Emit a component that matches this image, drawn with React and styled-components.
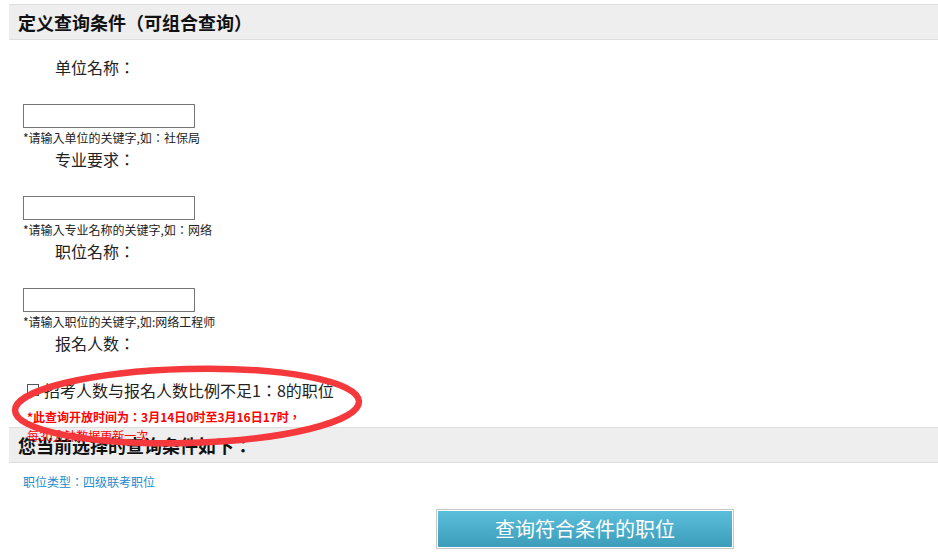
import styled, { createGlobalStyle } from "styled-components";

const GlobalStyle = createGlobalStyle`
  html, body {
    margin: 0;
    padding: 0;
    background: #ffffff;
  }
  body {
    font-family: "Noto Sans CJK TC", "Noto Sans CJK SC", "Liberation Sans", sans-serif;
    color: #222;
  }
`;

const fields = [
  { label: "单位名称：", hint: "*请输入单位的关键字,如：社保局" },
  { label: "专业要求：", hint: "*请输入专业名称的关键字,如：网络" },
  { label: "职位名称：", hint: "*请输入职位的关键字,如:网络工程师" },
];

export default function App() {
  return (
    <>
      <GlobalStyle />
      <Page>
        <Bar>定义查询条件（可组合查询）</Bar>
        {fields.map((f) => (
          <Field key={f.label}>
            <Label>{f.label}</Label>
            <TextInput type="text" />
            <Hint>{f.hint}</Hint>
          </Field>
        ))}
        <Label>报名人数：</Label>
        <CheckRow>
          <Box />
          <span>招考人数与报名人数比例不足1：8的职位</span>
        </CheckRow>
        <Notice>
          <b>*此查询开放时间为：3月14日0时至3月16日17时，</b>
          <br />
          每30分钟数据更新一次
        </Notice>
        <Bar>您当前选择的查询条件如下：</Bar>
        <Selected>职位类型：四级联考职位</Selected>
        <Submit>查询符合条件的职位</Submit>

        <Mark viewBox="0 0 938 556" width="938" height="556">
          <ellipse
            cx="187"
            cy="406"
            rx="172"
            ry="37"
            fill="none"
            stroke="#f4383b"
            strokeWidth="6.5"
            transform="rotate(-1.5 187 406)"
          />
        </Mark>
      </Page>
    </>
  );
}

const Page = styled.div`
  position: relative;
  width: 938px;
  height: 556px;
  padding: 4px 0 0 9px;
  box-sizing: border-box;
  overflow: hidden;
`;

const Bar = styled.div`
  position: relative;
  height: 34px;
  line-height: 34px;
  background: #eeeeee;
  border-top: 1px solid #dedede;
  border-bottom: 1px solid #dedede;
  padding-left: 9px;
  font-size: 18px;
  font-weight: bold;
  color: #111;
`;

const Field = styled.div`
  display: flex;
  flex-direction: column;
  align-items: flex-start;
`;

const Label = styled.div`
  height: 24px;
  line-height: 24px;
  margin-top: 15px;
  padding-left: 46px;
  font-size: 16px;
  color: #222;

  ${Field} + ${Field} &, ${Field} + & {
    margin-top: 0;
  }
`;

const TextInput = styled.input`
  width: 172px;
  height: 24px;
  box-sizing: border-box;
  margin: 25px 0 0 14px;
  border: 1px solid #767676;
  padding: 0 3px;
  background: #fff;
`;

const Hint = styled.div`
  height: 19px;
  line-height: 19px;
  padding-left: 14px;
  font-size: 12px;
  color: #222;
`;

const CheckRow = styled.div`
  display: flex;
  align-items: center;
  gap: 5px;
  margin-top: 24px;
  padding-left: 18px;
  height: 22px;
  font-size: 16px;
  color: #222;
`;

const Box = styled.span`
  width: 10px;
  height: 10px;
  border: 1px solid #555;
  background: #fff;
`;

const Notice = styled.div`
  position: relative;
  z-index: 2;
  height: 20px;
  margin-top: 6px;
  padding-left: 18px;
  font-size: 12px;
  line-height: 19px;
  color: #ff0000;

  b {
    font-weight: bold;
  }
`;

const Selected = styled.div`
  margin-top: 10px;
  padding-left: 14px;
  font-size: 12px;
  line-height: 18px;
  color: #1a8ccf;
`;

const Submit = styled.button`
  display: block;
  width: 298px;
  height: 40px;
  margin: 18px 0 0 427px;
  border: 1px solid #c8c8c8;
  box-shadow: inset 0 0 0 1px #ffffff;
  background: linear-gradient(to bottom, #5bbfdc, #3c9cb9);
  color: #ffffff;
  font-family: "Noto Sans CJK TC", "Noto Sans CJK SC", "Liberation Sans", sans-serif;
  font-size: 20px;
  line-height: 38px;
  padding: 0;
  cursor: pointer;
`;

const Mark = styled.svg`
  position: absolute;
  left: 0;
  top: 0;
  z-index: 3;
  pointer-events: none;
`;
